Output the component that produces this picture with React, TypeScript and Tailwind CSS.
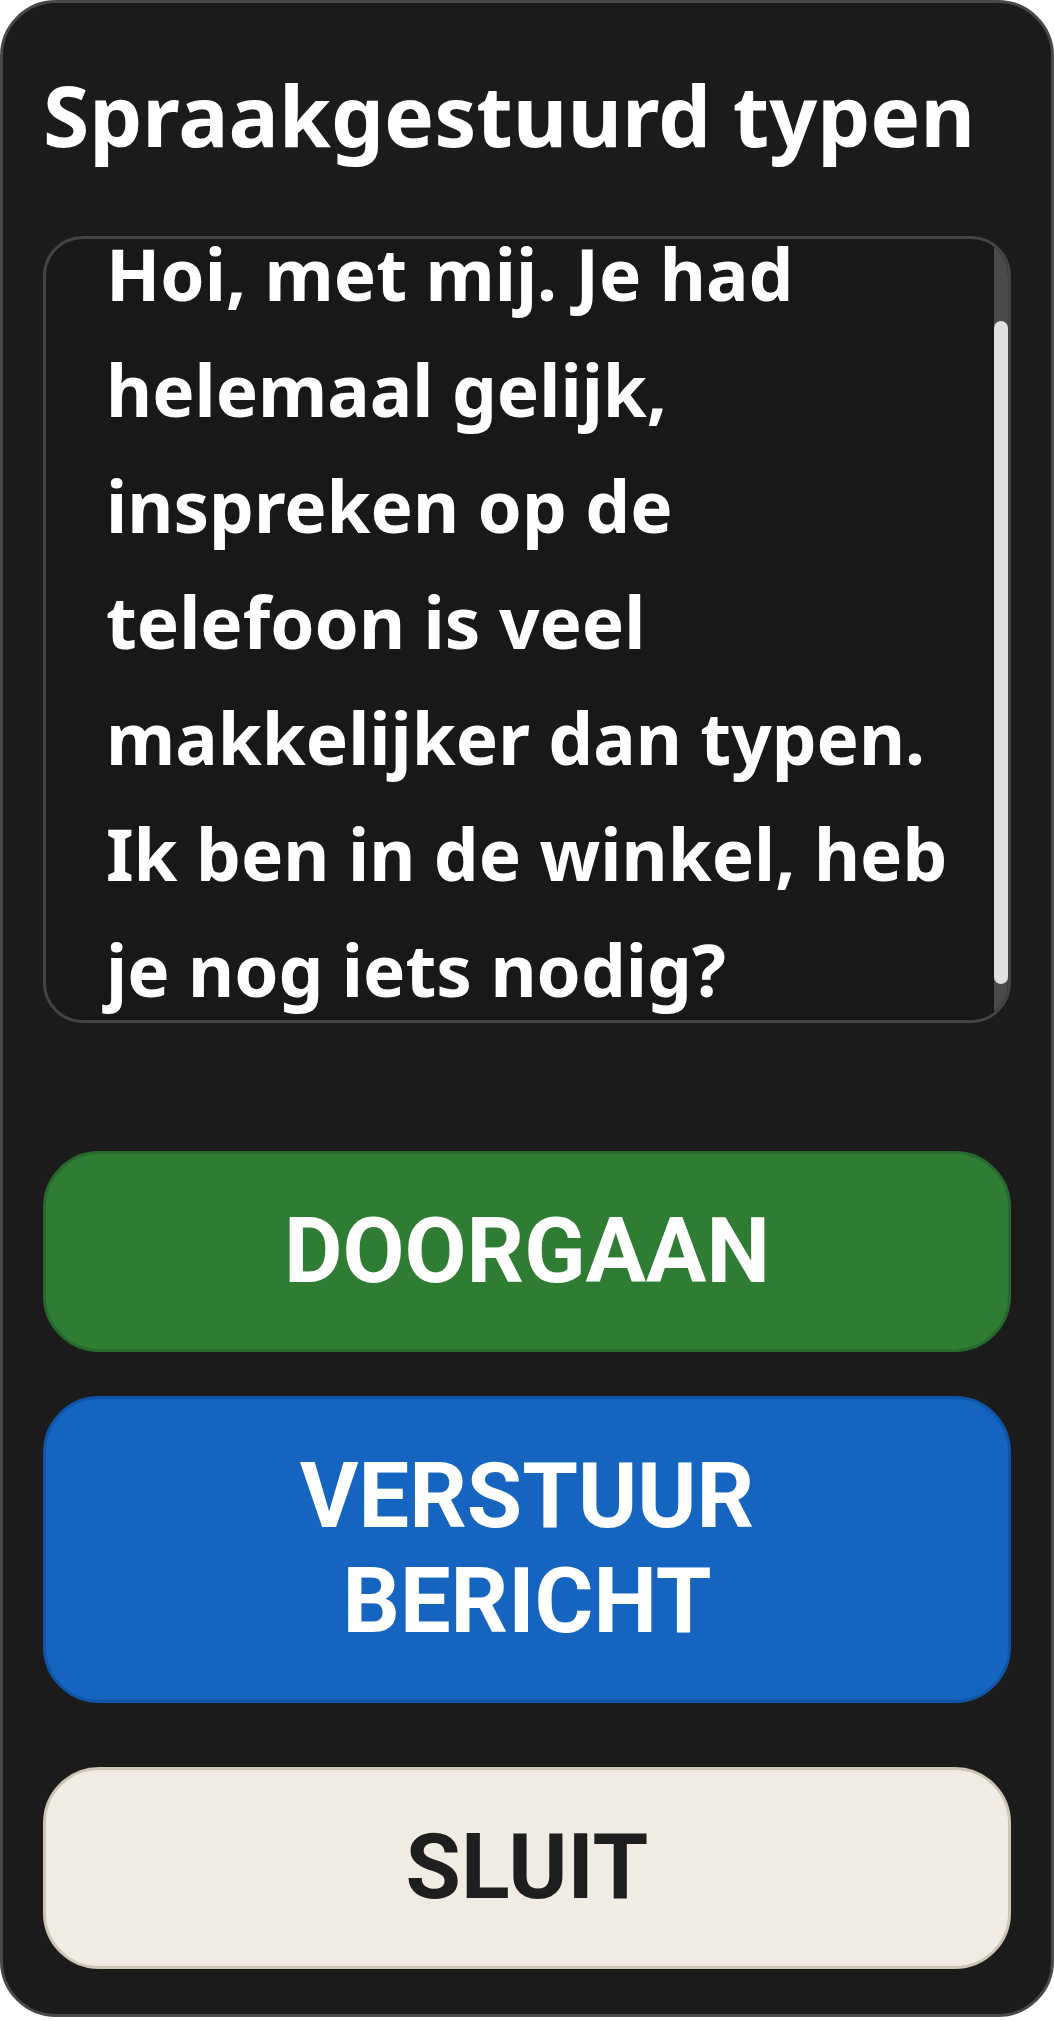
import React from 'react'

const message =
  'Hoi, met mij. Je had helemaal gelijk, inspreken op de telefoon is veel makkelijker dan typen. Ik ben in de winkel, heb je nog iets nodig?'

function ActionButton({
  label,
  className,
}: {
  label: React.ReactNode
  className: string
}) {
  return (
    <button
      type="button"
      className={`w-full rounded-[56px] border-[3px] font-['Roboto',sans-serif] text-[90px] font-bold leading-[1.17] ${className}`}
    >
      {label}
    </button>
  )
}

export default function App() {
  return (
    <div className="min-h-[2021px] w-[1054px] bg-white">
      <div className="flex h-[2017px] flex-col rounded-[56px] border-[3px] border-[#484848] bg-[#1b1b1b] px-[40px]">
        <h1 className="mt-[62px] font-['Noto_Sans',sans-serif] text-[84px] font-bold leading-[1.2] text-white">
          Spraakgestuurd typen
        </h1>

        <div className="relative mt-[70px] h-[787px] overflow-hidden rounded-[40px] border-[3px] border-[#444444] bg-[#181818]">
          <p lang="nl" className="-mt-[23px] pl-[60px] pr-[42px] font-['Noto_Sans',sans-serif] text-[71px] font-bold leading-[116px] text-white">
            {message}
          </p>
          {/* scrollbar */}
          <div className="absolute top-0 right-0 bottom-0 w-[14px] bg-[#4a4a4a]">
            <div className="absolute top-[82px] right-0 left-0 h-[663px] rounded-full bg-[#e0e0e0]" />
          </div>
        </div>

        <div className="mt-[128px] flex flex-col">
          <ActionButton
            label="DOORGAAN"
            className="h-[201px] border-[#28692c] bg-[#2e7d32] text-white"
          />
          <ActionButton
            label={
              <>
                VERSTUUR
                <br />
                BERICHT
              </>
            }
            className="mt-[44px] h-[307px] border-[#0f55a8] bg-[#1565c0] text-white"
          />
          <ActionButton
            label="SLUIT"
            className="mt-[64px] h-[202px] border-[#cdc6b6] bg-[#f0ece4] text-[#1e1e1e]"
          />
        </div>
      </div>
    </div>
  )
}
